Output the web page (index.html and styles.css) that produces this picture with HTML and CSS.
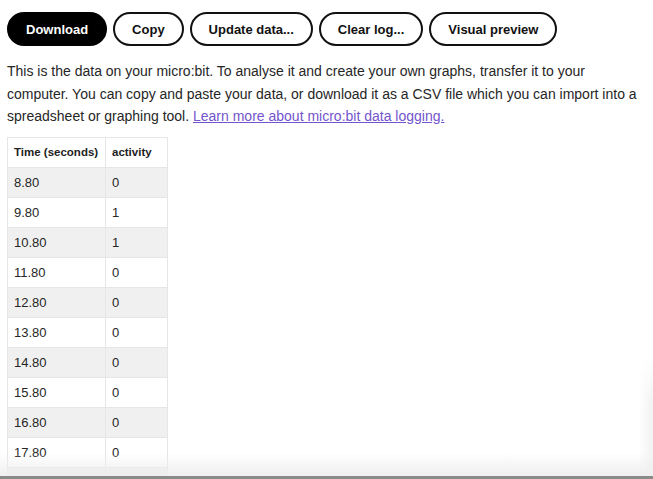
FILE: index.html
```html
<!DOCTYPE html>
<html>
<head>
<meta charset="utf-8">
<link rel="stylesheet" href="styles.css">
</head>
<body>
<div class="page">
  <div class="actions">
    <button class="btn btn-primary">Download</button>
    <button class="btn">Copy</button>
    <button class="btn">Update data...</button>
    <button class="btn">Clear log...</button>
    <button class="btn">Visual preview</button>
  </div>
  <p class="intro">This is the data on your micro:bit. To analyse it and create your own graphs, transfer it to your computer. You can copy and paste your data, or download it as a CSV file which you can import into a spreadsheet or graphing tool. <a href="#" class="link">Learn more about micro:bit data logging.</a></p>
  <table class="data">
    <colgroup><col class="col-time"><col class="col-val"></colgroup>
    <thead>
      <tr><th>Time (seconds)</th><th>activity</th></tr>
    </thead>
    <tbody>
      <tr><td>8.80</td><td>0</td></tr>
      <tr><td>9.80</td><td>1</td></tr>
      <tr><td>10.80</td><td>1</td></tr>
      <tr><td>11.80</td><td>0</td></tr>
      <tr><td>12.80</td><td>0</td></tr>
      <tr><td>13.80</td><td>0</td></tr>
      <tr><td>14.80</td><td>0</td></tr>
      <tr><td>15.80</td><td>0</td></tr>
      <tr><td>16.80</td><td>0</td></tr>
      <tr><td>17.80</td><td>0</td></tr>
      <tr><td>18.80</td><td>0</td></tr>
    </tbody>
  </table>
</div>
<div class="bottom-shade"></div>
<div class="side-shade"></div>
</body>
</html>
```

FILE: styles.css
```css
html, body {
  margin: 0;
  padding: 0;
  background: #fff;
  overflow: hidden;
}
body {
  font-family: "Liberation Sans", Arial, sans-serif;
  color: #262626;
  height: 479px;
}
.page {
  padding: 12px 7px 0 7px;
}
.actions {
  display: flex;
  gap: 6px;
}
.btn {
  height: 34px;
  border: 2px solid #111;
  border-radius: 17px;
  background: #fff;
  color: #111;
  font-family: "Liberation Sans", Arial, sans-serif;
  font-weight: bold;
  font-size: 13px;
  padding: 0 17px;
  cursor: pointer;
}
.btn-primary {
  background: #000;
  color: #fff;
  border-color: #000;
}
.intro {
  margin: 14px 0 9px 0;
  font-size: 14px;
  line-height: 22.5px;
  max-width: 640px;
}
.link {
  color: #7354cc;
  text-decoration: underline;
}
.data {
  border-collapse: collapse;
  font-size: 13px;
  table-layout: fixed;
  width: 160px;
}
.col-time { width: 98px; }
.col-val { width: 62px; }
.data th, .data td {
  border: 1px solid #e6e6e6;
  height: 30px;
  padding: 0 6px;
  text-align: left;
  box-sizing: border-box;
  white-space: nowrap;
  overflow: hidden;
}
.data th {
  font-weight: bold;
  font-size: 11.5px;
  color: #222;
}
.data tbody tr:nth-child(odd) td {
  background: #f0f0f0;
}
.bottom-shade {
  position: fixed;
  left: 0;
  right: 0;
  bottom: 0;
  height: 26px;
  background: linear-gradient(to bottom, rgba(240,240,240,0) 0%, rgba(238,238,238,0.95) 90%, #8a8a8a 90%, #8a8a8a 100%);
}
.side-shade {
  position: fixed;
  right: 0;
  bottom: 3px;
  width: 14px;
  height: 120px;
  background: linear-gradient(to bottom, rgba(255,255,255,0), rgba(238,238,238,0.8) 40%);
  -webkit-mask-image: linear-gradient(to right, transparent, #000);
  mask-image: linear-gradient(to right, transparent, #000);
}
```
